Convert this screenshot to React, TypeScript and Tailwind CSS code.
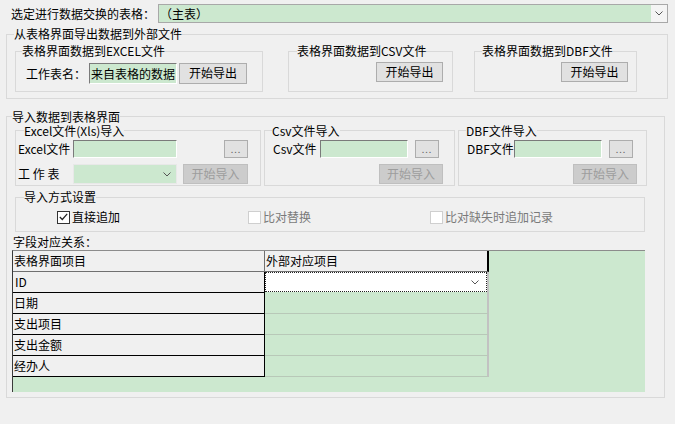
import React from "react";

const green = "bg-[#cce8cf]";

function Chevron({ className = "" }: { className?: string }) {
  return (
    <svg width="8" height="5" viewBox="0 0 8 5" className={className}>
      <polyline points="0.5,0.5 4,4 7.5,0.5" fill="none" stroke="#555" strokeWidth="1" />
    </svg>
  );
}

function TextBox({ w, h, value }: { w: string; h: string; value?: string }) {
  return (
    <div
      className={`${w} ${h} ${green} border border-t-[#7a7a7a] border-l-[#7a7a7a] border-r-white border-b-white flex items-center pl-[1px] overflow-hidden whitespace-nowrap`}
    >
      {value}
    </div>
  );
}

function Btn({ w, h, label, disabled = false, className = "" }: { w: string; h: string; label: string; disabled?: boolean; className?: string }) {
  return (
    <div
      className={`${w} ${h} ${className} flex items-center justify-center border ${
        disabled ? "bg-[#cccccc] border-[#bfbfbf] text-[#9d9d9d]" : "bg-[#e1e1e1] border-[#adadad] text-black"
      }`}
    >
      {label}
    </div>
  );
}

function Dots({ className = "" }: { className?: string }) {
  return (
    <div className={`w-[24px] h-[18px] bg-[#e1e1e1] border border-[#adadad] flex items-end justify-center pb-[3px] text-[9px] leading-[9px] text-[#666] tracking-[1px] ${className}`}>
      ...
    </div>
  );
}

function Check({ checked, label }: { checked?: boolean; label: string }) {
  return (
    <div className="flex items-center">
      <div
        className={`w-[13px] h-[13px] bg-white border flex items-center justify-center ${
          checked ? "border-[#333]" : "border-[#cfcfcf]"
        }`}
      >
        {checked && (
          <svg width="9" height="8" viewBox="0 0 9 8">
            <polyline points="0.8,4 3.3,6.5 8.2,0.8" fill="none" stroke="#222" strokeWidth="1.2" />
          </svg>
        )}
      </div>
      <span className={`ml-[2px] ${checked ? "text-black" : "text-[#7a7a7a]"}`}>{label}</span>
    </div>
  );
}

const fields = ["日期", "支出项目", "支出金额", "经办人"];

export default function App() {
  return (
    <div className="w-[675px] h-[424px] bg-[#f0f0f0] text-[12px] leading-[14px] text-black overflow-hidden font-['Noto_Sans_CJK_SC',sans-serif]">
      {/* top selector */}
      <div className="flex items-center h-[19px] mt-[4px]">
        <div className="pl-[11px] w-[158px] whitespace-nowrap">选定进行数据交换的表格：</div>
        <div className="w-[510px] h-[19px] flex border border-[#a8a8a8]">
          <div className={`flex-1 ${green} flex items-center pl-[1px]`}>（主表）</div>
          <div className="w-[16px] bg-[#f4f4f4] flex items-center justify-center">
            <Chevron />
          </div>
        </div>
      </div>

      {/* export */}
      <fieldset className="mt-[4px] ml-[6px] w-[662px] h-[72px] border border-[#d9d9d9] min-w-0">
        <legend className="ml-[7px] leading-[14px]">从表格界面导出数据到外部文件</legend>
        <div className="flex ml-[8px] mt-[3px]">
          <fieldset className="w-[248px] h-[48px] border border-[#d9d9d9] min-w-0">
            <legend className="ml-[6px] leading-[14px]">表格界面数据到EXCEL文件</legend>
            <div className="flex items-center h-[21px] mt-[5px] pl-[10px]">
              <div className="w-[63px] whitespace-nowrap">工作表名：</div>
              <TextBox w="w-[88px]" h="h-[21px]" value="来自表格的数据" />
              <Btn w="w-[68px]" h="h-[21px]" label="开始导出" className="ml-[2px] -mt-px" />
            </div>
          </fieldset>
          <fieldset className="ml-[25px] w-[165px] h-[48px] border border-[#d9d9d9] min-w-0">
            <legend className="ml-[8px] leading-[14px]">表格界面数据到CSV文件</legend>
            <div className="flex justify-end pr-[9px] mt-[4px]">
              <Btn w="w-[67px]" h="h-[20px]" label="开始导出" />
            </div>
          </fieldset>
          <fieldset className="ml-[21px] w-[163px] h-[48px] border border-[#d9d9d9] min-w-0">
            <legend className="ml-[7px] leading-[14px]">表格界面数据到DBF文件</legend>
            <div className="flex justify-end pr-[8px] mt-[4px]">
              <Btn w="w-[67px]" h="h-[20px]" label="开始导出" />
            </div>
          </fieldset>
        </div>
      </fieldset>

      {/* import */}
      <fieldset className="mt-[11px] ml-[6px] w-[659px] h-[288px] border border-[#d9d9d9] min-w-0">
        <legend className="ml-[5px] leading-[13px]">导入数据到表格界面</legend>
        <div className="flex ml-[8px] mt-[1px]">
          <fieldset className="w-[246px] h-[62px] border border-[#d9d9d9] min-w-0">
            <legend className="ml-[8px] leading-[13px]">Excel文件(Xls)导入</legend>
            <div className="flex items-center h-[18px] mt-[3px]">
              <div className="pl-[2px] w-[57px] whitespace-nowrap">Excel文件</div>
              <TextBox w="w-[104px]" h="h-[18px]" />
              <Dots className="ml-[47px]" />
            </div>
            <div className="flex items-center h-[20px] mt-[6px]">
              <div className="pl-[2px] w-[57px] whitespace-nowrap">工 作 表</div>
              <div className={`w-[104px] h-[20px] ${green} border border-[#e8e8e8] flex items-center justify-end pr-[5px]`}>
                <Chevron />
              </div>
              <Btn w="w-[65px]" h="h-[20px]" label="开始导入" disabled className="ml-[6px]" />
            </div>
          </fieldset>
          <fieldset className="ml-[3px] w-[191px] h-[62px] border border-[#d9d9d9] min-w-0">
            <legend className="ml-[7px] leading-[13px]">Csv文件导入</legend>
            <div className="flex items-center h-[18px] mt-[3px]">
              <div className="pl-[8px] w-[55px] whitespace-nowrap">Csv文件</div>
              <TextBox w="w-[88px]" h="h-[18px]" />
              <Dots className="ml-[7px]" />
            </div>
            <div className="flex items-center h-[20px] mt-[6px] pl-[114px]">
              <Btn w="w-[64px]" h="h-[20px]" label="开始导入" disabled />
            </div>
          </fieldset>
          <fieldset className="ml-[3px] w-[189px] h-[62px] border border-[#d9d9d9] min-w-0">
            <legend className="ml-[7px] leading-[13px]">DBF文件导入</legend>
            <div className="flex items-center h-[18px] mt-[3px]">
              <div className="pl-[8px] w-[55px] whitespace-nowrap">DBF文件</div>
              <TextBox w="w-[88px]" h="h-[18px]" />
              <Dots className="ml-[7px]" />
            </div>
            <div className="flex items-center h-[20px] mt-[6px] pl-[114px]">
              <Btn w="w-[64px]" h="h-[20px]" label="开始导入" disabled />
            </div>
          </fieldset>
        </div>

        <fieldset className="mt-[4px] ml-[8px] w-[630px] h-[42px] border border-[#d9d9d9] min-w-0">
          <legend className="ml-[8px] leading-[14px]">导入方式设置</legend>
          <div className="flex items-center h-[14px] mt-[6px] pl-[41px]">
            <div className="w-[191px]">
              <Check checked label="直接追加" />
            </div>
            <div className="w-[182px]">
              <Check label="比对替换" />
            </div>
            <Check label="比对缺失时追加记录" />
          </div>
        </fieldset>

        <div className="mt-[3px] ml-[6px] h-[14px]">字段对应关系：</div>

        {/* grid */}
        <div className={`mt-[1px] ml-[5px] w-[633px] h-[142px] ${green} border-t border-t-[#8c8c8c] border-l border-l-[#3a3a3a]`}>
          <div className="flex h-[21px]">
            <div className="w-[252px] bg-[#f0f0f0] border-r border-b border-[#707070] flex items-center pl-[1px]">
              表格界面项目
            </div>
            <div className="w-[224px] bg-[#f0f0f0] border-b border-[#707070] border-r-2 border-r-black flex items-center pl-[1px]">
              外部对应项目
            </div>
          </div>
          <div className="flex h-[21px]">
            <div className="w-[252px] bg-[#f0f0f0] border-r border-b border-black flex items-center pl-[2px]">
              ID
            </div>
            <div className="w-[222px] h-[20px] bg-white border border-dotted border-[#222] flex items-center justify-end pr-[7px]">
              <Chevron />
            </div>
            <div className="w-[2px] bg-[#c2c2c2]" />
          </div>
          {fields.map((f) => (
            <div key={f} className="flex h-[21px]">
              <div className="w-[252px] bg-[#f0f0f0] border-r border-b border-black flex items-center pl-[1px]">
                {f}
              </div>
              <div className="w-[224px] border-b border-[#b8c8b8] border-r-2 border-r-[#c2c2c2]" />
            </div>
          ))}
        </div>
      </fieldset>
    </div>
  );
}
